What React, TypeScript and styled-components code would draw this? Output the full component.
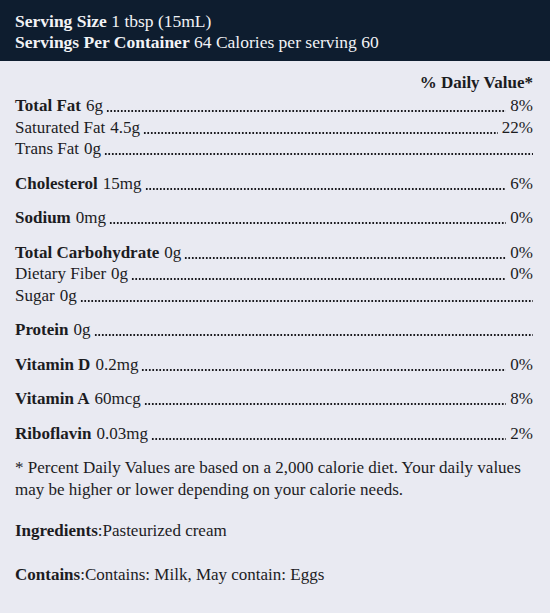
import React from 'react';
import { createGlobalStyle, styled } from 'styled-components';

const GlobalStyle = createGlobalStyle`
    html, body {
        margin: 0;
        padding: 0;
        background: #e9eaf2;
    }
    body {
        font-family: "Liberation Serif", "Times New Roman", serif;
        color: #1c1c1f;
    }
`;

interface Nutrient {
    name: string;
    amount: string;
    percent?: string;
    bold?: boolean;
}

const groups: Nutrient[][] = [
    [
        { name: 'Total Fat', amount: '6g', percent: '8%', bold: true },
        { name: 'Saturated Fat', amount: '4.5g', percent: '22%' },
        { name: 'Trans Fat', amount: '0g' },
    ],
    [{ name: 'Cholesterol', amount: '15mg', percent: '6%', bold: true }],
    [{ name: 'Sodium', amount: '0mg', percent: '0%', bold: true }],
    [
        { name: 'Total Carbohydrate', amount: '0g', percent: '0%', bold: true },
        { name: 'Dietary Fiber', amount: '0g', percent: '0%' },
        { name: 'Sugar', amount: '0g' },
    ],
    [{ name: 'Protein', amount: '0g', bold: true }],
    [{ name: 'Vitamin D', amount: '0.2mg', percent: '0%', bold: true }],
    [{ name: 'Vitamin A', amount: '60mcg', percent: '8%', bold: true }],
    [{ name: 'Riboflavin', amount: '0.03mg', percent: '2%', bold: true }],
];

export default function App() {
    return (
        <>
            <GlobalStyle />
            <Label>
                <Header>
                    <HeaderLine>
                        <strong>Serving Size</strong> 1 tbsp (15mL)
                    </HeaderLine>
                    <HeaderLine>
                        <strong>Servings Per Container</strong> 64 Calories per serving 60
                    </HeaderLine>
                </Header>
                <Body>
                    <DailyValue>% Daily Value*</DailyValue>
                    <Groups>
                        {groups.map((group, i) => (
                            <Group key={i}>
                                {group.map((n) => (
                                    <Row key={n.name}>
                                        <Name $bold={n.bold}>{n.name}</Name>
                                        <Amount>{n.amount}</Amount>
                                        <Leader />
                                        {n.percent && <Percent>{n.percent}</Percent>}
                                    </Row>
                                ))}
                            </Group>
                        ))}
                        <Footnote>
                            * Percent Daily Values are based on a 2,000 calorie diet. Your daily values
                            may be higher or lower depending on your calorie needs.
                        </Footnote>
                    </Groups>
                    <Extra>
                        <strong>Ingredients</strong>:Pasteurized cream
                    </Extra>
                    <Extra>
                        <strong>Contains</strong>:Contains: Milk, May contain: Eggs
                    </Extra>
                </Body>
            </Label>
        </>
    );
}

const Label = styled.div`
    width: 550px;
    min-height: 613px;
    display: flex;
    flex-direction: column;
    background: #e9eaf2;
`;

const Header = styled.div`
    background: #0e1d2f;
    color: #f2f3f6;
    padding: 11px 15px 8px;
    display: flex;
    flex-direction: column;
`;

const HeaderLine = styled.div`
    font-size: 17.5px;
    line-height: 21px;

    strong {
        font-weight: 700;
    }
`;

const Body = styled.div`
    padding: 11px 17px 0 15px;
    display: flex;
    flex-direction: column;
`;

const DailyValue = styled.div`
    text-align: right;
    font-weight: 700;
    font-size: 17px;
    line-height: 21px;
    margin-bottom: 2px;
`;

const Groups = styled.div`
    display: flex;
    flex-direction: column;
    gap: 13px;
`;

const Group = styled.div`
    display: flex;
    flex-direction: column;
`;

const Row = styled.div`
    display: flex;
    align-items: baseline;
    height: 21.5px;
    font-size: 17px;
    line-height: 21.5px;
`;

const Name = styled.span<{ $bold?: boolean }>`
    font-weight: ${(p) => (p.$bold ? 700 : 400)};
    margin-right: 5px;
`;

const Amount = styled.span`
    margin-right: 3px;
`;

const Leader = styled.span`
    flex: 1;
    align-self: stretch;
    background-image: radial-gradient(circle, #1a1a1f 1px, transparent 1.4px);
    background-size: 3.5px 4px;
    background-repeat: repeat-x;
    background-position: 0 14px;
`;

const Percent = styled.span`
    margin-left: 4px;
`;

const Footnote = styled.p`
    margin: 0;
    font-size: 17px;
    line-height: 22px;
`;

const Extra = styled.p`
    margin: 19px 0 3px;
    font-size: 17px;
    line-height: 22px;

    strong {
        font-weight: 700;
    }
`;
